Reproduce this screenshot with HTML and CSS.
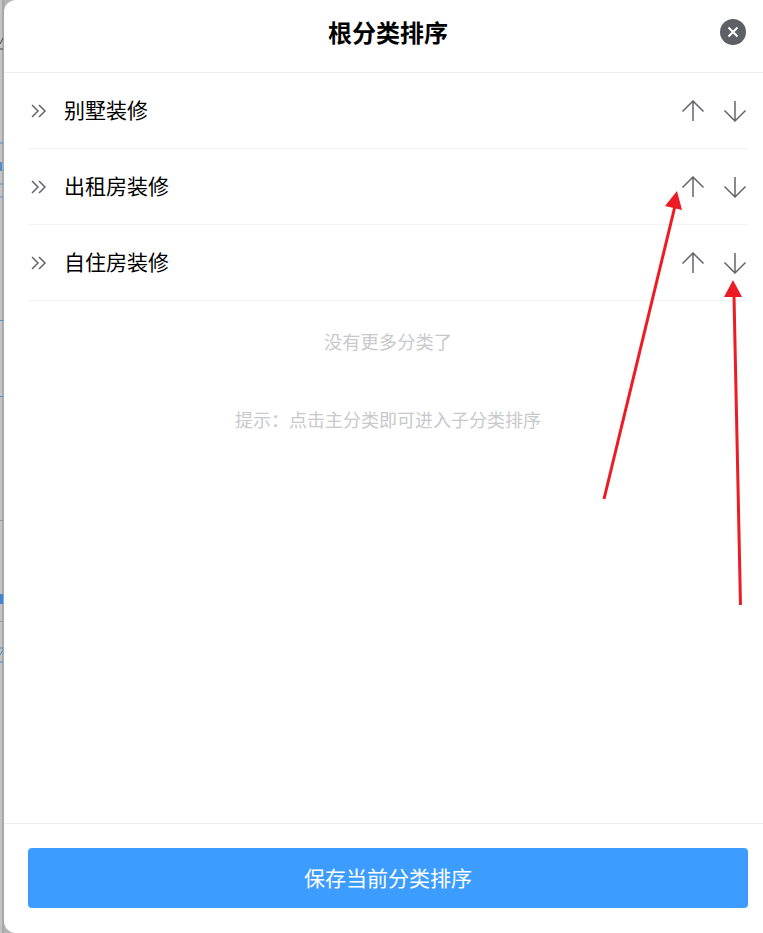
FILE: index.html
```html
<html>
<head>
    <title>根分类排序</title>
    <link rel="stylesheet" href="styles.css">
</head>
<body>
<div id="page">
    <!-- what shows of the page behind the popup -->
    <svg class="behind" width="4" height="933" viewBox="0 0 4 933">
        <path d="M0 44 L3 38 M0 49 H3" stroke="#444" stroke-width="1" fill="none"/>
        <path d="M0 143 H3 M0 184 H3 M0 197 H3 M0 320.5 H3 M0 396.5 H3" stroke="#4a90d9" stroke-width="1"/>
        <rect x="0" y="162" width="2" height="9" fill="#4a90d9"/>
        <rect x="0" y="594" width="3" height="10" fill="#3a86dc"/>
        <path d="M0 520.5 H3 M0 621.5 H3" stroke="#999" stroke-width="1"/>
        <path d="M0 648 H3 M0 655 L3 650 M0 662 H3" stroke="#3d85c6" stroke-width="1" fill="none"/>
    </svg>
    <div id="popup">
        <div class="header">
            <h1 class="title">根分类排序</h1>
            <div class="close">
                <svg width="12" height="12" viewBox="0 0 12 12"><path d="M1.5 1.5 L10.5 10.5 M10.5 1.5 L1.5 10.5" stroke="#fff" stroke-width="2"/></svg>
            </div>
        </div>
        <div class="content">
            <div class="row">
                <svg class="more" width="16" height="14" viewBox="0 0 16 14"><path d="M1 1 L7 7 L1 13 M8 1 L14 7 L8 13" class="line"/></svg>
                <span class="name">别墅装修</span>
                <svg class="move" width="24" height="22" viewBox="0 0 24 22"><path d="M12 21 V1 M1.5 11.5 L12 1 L22.5 11.5" class="line"/></svg>
                <svg class="move" width="24" height="22" viewBox="0 0 24 22"><path d="M12 1 V21 M1.5 10.5 L12 21 L22.5 10.5" class="line"/></svg>
            </div>
            <div class="row">
                <svg class="more" width="16" height="14" viewBox="0 0 16 14"><path d="M1 1 L7 7 L1 13 M8 1 L14 7 L8 13" class="line"/></svg>
                <span class="name">出租房装修</span>
                <svg class="move" width="24" height="22" viewBox="0 0 24 22"><path d="M12 21 V1 M1.5 11.5 L12 1 L22.5 11.5" class="line"/></svg>
                <svg class="move" width="24" height="22" viewBox="0 0 24 22"><path d="M12 1 V21 M1.5 10.5 L12 21 L22.5 10.5" class="line"/></svg>
            </div>
            <div class="row">
                <svg class="more" width="16" height="14" viewBox="0 0 16 14"><path d="M1 1 L7 7 L1 13 M8 1 L14 7 L8 13" class="line"/></svg>
                <span class="name">自住房装修</span>
                <svg class="move" width="24" height="22" viewBox="0 0 24 22"><path d="M12 21 V1 M1.5 11.5 L12 1 L22.5 11.5" class="line"/></svg>
                <svg class="move" width="24" height="22" viewBox="0 0 24 22"><path d="M12 1 V21 M1.5 10.5 L12 21 L22.5 10.5" class="line"/></svg>
            </div>
            <div class="nomore">没有更多分类了</div>
            <div class="tip">提示：点击主分类即可进入子分类排序</div>
        </div>
        <div class="footer">
            <button class="save"><span class="save_text">保存当前分类排序</span></button>
        </div>
    </div>
    <!-- red arrows drawn on top of the screenshot -->
    <svg class="marks" width="763" height="933" viewBox="0 0 763 933">
        <path d="M604 499 L675 206" stroke="#ed1c24" stroke-width="3" fill="none"/>
        <polygon points="677,191 665,206 682,210" fill="#ed1c24"/>
        <path d="M740.5 605 L734 296" stroke="#ed1c24" stroke-width="3" fill="none"/>
        <polygon points="733,280 724,297 742,297" fill="#ed1c24"/>
    </svg>
</div>
</body>
</html>
```

FILE: styles.css
```css
html, body {
    margin: 0;
    padding: 0;
}
body {
    font-family: "Noto Sans CJK SC", "Liberation Sans", sans-serif;
    background: #b4b4b4;
}
#page {
    position: relative;
    display: flex;
    width: 763px;
    height: 933px;
    overflow: hidden;
}
.behind {
    flex: none;
    display: block;
    width: 4px;
    background: linear-gradient(to right, #c4c4c4 0, #c4c4c4 2px, #a8a8a8 2px, #a8a8a8 4px);
}
#popup {
    flex: 1;
    display: flex;
    flex-direction: column;
    background: #fff;
    border-radius: 12px 0 0 12px;
}
.header {
    position: relative;
    height: 72px;
    flex: none;
    display: flex;
    align-items: center;
    justify-content: center;
    border-bottom: 1px solid #ebedf0;
    padding-left: 9px;
    box-sizing: content-box;
}
.title {
    margin: 0 0 9px 0;
    font-size: 24px;
    font-weight: bold;
    color: #000;
}
.close {
    position: absolute;
    left: 716px;
    top: 19px;
    width: 26px;
    height: 26px;
    border-radius: 50%;
    background: #5f6065;
    display: flex;
    align-items: center;
    justify-content: center;
}
.content {
    flex: 1;
    padding: 0 15px 0 24px;
}
.row {
    display: flex;
    align-items: center;
    height: 75px;
    border-bottom: 1px solid #f2f3f5;
}
.line {
    fill: none;
    stroke: #646569;
    stroke-width: 1.5;
}
.more {
    margin-left: 3px;
    margin-right: 17px;
}
.name {
    flex: 1;
    font-size: 21px;
    color: #000;
    padding-bottom: 4px;
}
.move {
    margin-left: 17px;
    margin-right: 1px;
}
.nomore {
    margin-top: 27px;
    text-align: center;
    font-size: 18.3px;
    color: #c8c9cc;
}
.tip {
    margin-top: 52px;
    text-align: center;
    font-size: 18px;
    color: #c8c9cc;
}
.footer {
    flex: none;
    height: 85px;
    padding: 24px 15px 0 24px;
    border-top: 1px solid #ebedf0;
}
.save {
    display: block;
    width: 100%;
    height: 60px;
    border: 0;
    padding: 0 0 2px 0;
    border-radius: 4px;
    background: #3c9cff;
    color: #fff;
    font-family: inherit;
    font-size: 21px;
}
.marks {
    position: absolute;
    left: 0;
    top: 0;
    pointer-events: none;
}
```
